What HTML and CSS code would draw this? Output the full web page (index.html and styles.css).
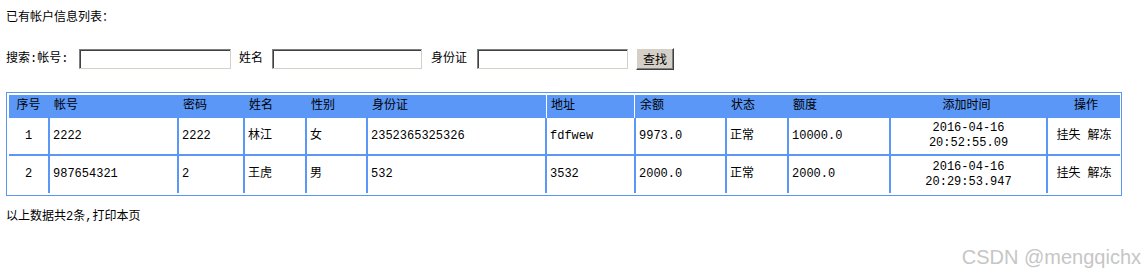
FILE: index.html
```html
<!DOCTYPE html>
<html lang="zh-CN">
<head>
<meta charset="utf-8">
<title>已有帐户信息列表</title>
<link rel="stylesheet" href="styles.css">
</head>
<body>
<div class="page">
  <div class="title">已有帐户信息列表：</div>
  <form class="search">
    <span class="lbl-first">搜索:帐号:</span>
    <input class="field f1" type="text">
    <span class="lbl l2">姓名</span>
    <input class="field f2" type="text">
    <span class="lbl l3">身份证</span>
    <input class="field f3" type="text">
    <button class="btn" type="button">查找</button>
  </form>
  <table class="list">
    <thead>
      <tr>
        <th class="c1 center">序号</th>
        <th class="c2">帐号</th>
        <th class="c3">密码</th>
        <th class="c4">姓名</th>
        <th class="c5">性别</th>
        <th class="c6">身份证</th>
        <th class="c7 split">地址</th>
        <th class="c8 split">余额</th>
        <th class="c9">状态</th>
        <th class="c10">额度</th>
        <th class="c11 center">添加时间</th>
        <th class="c12 center">操作</th>
      </tr>
    </thead>
    <tbody>
      <tr class="r1">
        <td class="center">1</td>
        <td>2222</td>
        <td>2222</td>
        <td>林江</td>
        <td>女</td>
        <td>2352365325326</td>
        <td>fdfwew</td>
        <td>9973.0</td>
        <td>正常</td>
        <td>10000.0</td>
        <td class="center time">2016-04-16<br>20:52:55.09</td>
        <td class="center">挂失 解冻</td>
      </tr>
      <tr class="r2">
        <td class="center">2</td>
        <td>987654321</td>
        <td>2</td>
        <td>王虎</td>
        <td>男</td>
        <td>532</td>
        <td>3532</td>
        <td>2000.0</td>
        <td>正常</td>
        <td>2000.0</td>
        <td class="center time">2016-04-16<br>20:29:53.947</td>
        <td class="center">挂失 解冻</td>
      </tr>
    </tbody>
  </table>
  <div class="foot">以上数据共2条,打印本页</div>
</div>
<div class="watermark">CSDN @mengqichx</div>
</body>
</html>
```
FILE: styles.css
```css
html, body {
  margin: 0;
  padding: 0;
  background: #fff;
}
body {
  font-family: "Liberation Mono", "Noto Sans CJK SC", monospace;
  font-size: 12px;
  color: #000;
  position: relative;
  width: 1147px;
  height: 277px;
  overflow: hidden;
}
.page {
  padding: 10px 6px 0 6px;
}
.title {
  line-height: 17px;
  height: 17px;
}
.search {
  display: flex;
  align-items: center;
  height: 22px;
  margin: 21px 0 0 0;
  line-height: 17px;
}
.field {
  box-sizing: border-box;
  height: 20px;
  padding: 0;
  margin: 0;
  background: #fff;
  border-top: 1px solid #7f7f7f;
  border-left: 1px solid #7f7f7f;
  border-right: 1px solid #d4d0c8;
  border-bottom: 1px solid #d4d0c8;
  box-shadow: inset 1px 1px 0 #404040;
  outline: none;
}
.f1 { width: 152px; margin-left: 10.6px; }
.f2 { width: 150px; margin-left: 9px; }
.f3 { width: 151px; margin-left: 10px; }
.lbl { margin-left: 8px; }
.l3 { margin-left: 9px; }
.btn {
  box-sizing: border-box;
  width: 38px;
  height: 22px;
  margin-left: 8px;
  padding: 0;
  font-family: "Liberation Mono", "Noto Sans CJK SC", monospace;
  font-size: 12px;
  color: #000;
  background: #d4d0c8;
  border-top: 1px solid #fff;
  border-left: 1px solid #fff;
  border-right: 1px solid #404040;
  border-bottom: 1px solid #404040;
  box-shadow: inset -1px -1px 0 #808080;
}
.list {
  box-sizing: border-box;
  margin-top: 22px;
  width: 1116px;
  table-layout: fixed;
  border-collapse: separate;
  border-spacing: 0;
  border: 1px solid #5b97f6;
  padding: 2px 1px 2px 2px;
}
.list th, .list td {
  box-sizing: border-box;
  white-space: nowrap;
  overflow: hidden;
}
.list th {
  height: 23px;
  padding: 0 0 0 4px;
  background: #5b97f6;
  font-weight: normal;
  text-align: left;
  border-left: 2px solid #5b97f6;
  line-height: 17px;
}
.list th.c1 { border-left: 0; padding: 0; }
.list th.split {
  border-left: 1px solid #5b97f6;
  padding-left: 5px;
  box-shadow: inset 1px 0 0 #fff;
}
.list th.c8.split {
  border-left: 0;
  padding-left: 6px;
  box-shadow: inset 1px 0 0 #fff, inset 2px 0 0 #5b97f6;
}
.list th.c11 { padding-left: 0; padding-right: 4px; }
.c1 { width: 39px; }
.c2 { width: 129px; }
.c3 { width: 66px; }
.c4 { width: 62px; }
.c5 { width: 61px; }
.c6 { width: 179px; }
.c7 { width: 89px; }
.c8 { width: 91px; }
.c9 { width: 62px; }
.c10 { width: 102px; }
.c11 { width: 157px; }
.c12 { width: 74px; }
.list td {
  padding: 0 0 0 3px;
  border-left: 2px solid #5b97f6;
  vertical-align: middle;
  line-height: 17px;
}
.list td:first-child { border-left: 0; padding: 0; }
.list .center { text-align: center; }
.list td.center { padding: 0; }
.list td.time { line-height: 15px; }
.list .r1 td { height: 36px; }
.list .r2 td { height: 39px; border-top: 2px solid #5b97f6; }
.foot {
  margin-top: 13px;
  line-height: 17px;
}
.watermark {
  position: absolute;
  right: 6px;
  top: 244px;
  font-family: "Liberation Sans", Arial, sans-serif;
  font-size: 20px;
  line-height: 26px;
  color: #c6c6c6;
}
```
